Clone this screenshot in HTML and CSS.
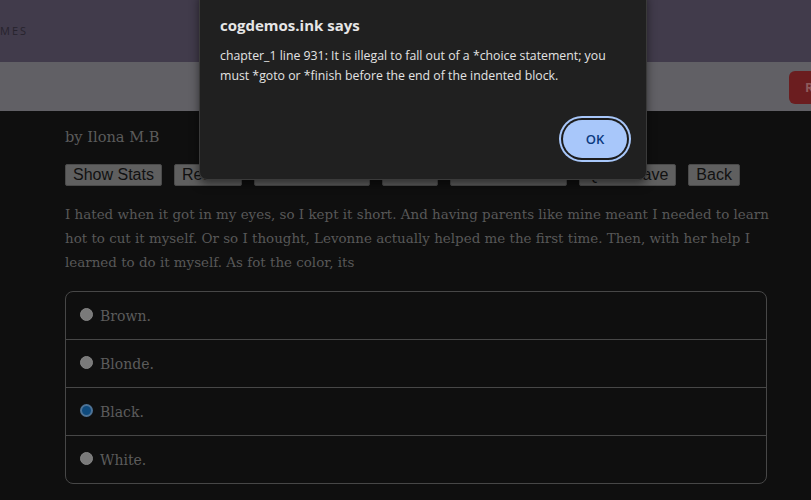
FILE: index.html
```html
<!DOCTYPE html>
<html lang="en">
<head>
<meta charset="utf-8">
<title>cogdemos</title>
<link rel="stylesheet" href="styles.css">
</head>
<body>
<header class="topbar">
  <nav class="topnav"><span class="navlink">MES</span></nav>
</header>
<div class="subbar">
  <span class="redbtn">R</span>
</div>
<main class="page">
  <div class="author">by Ilona M.B</div>
  <div class="buttons">
    <button class="btn">Show Stats</button>
    <button class="btn">Restart</button>
    <button class="btn">Achievements</button>
    <button class="btn">Menu</button>
    <button class="btn">Achievements</button>
    <button class="btn">Quick Save</button>
    <button class="btn">Back</button>
  </div>
  <p class="story">I hated when it got in my eyes, so I kept it short. And having parents like mine meant I needed to learn hot to cut it myself. Or so I thought, Levonne actually helped me the first time. Then, with her help I learned to do it myself. As fot the color, its</p>
  <form class="choices">
    <label class="choice"><input type="radio" name="c" class="radio"><span>Brown.</span></label>
    <label class="choice"><input type="radio" name="c" class="radio"><span>Blonde.</span></label>
    <label class="choice"><input type="radio" name="c" class="radio" checked><span>Black.</span></label>
    <label class="choice"><input type="radio" name="c" class="radio"><span>White.</span></label>
  </form>
</main>
<div class="dialog">
  <div class="dialog-title">cogdemos.ink says</div>
  <div class="dialog-msg">chapter_1 line 931: It is illegal to fall out of a *choice statement; you must *goto or *finish before the end of the indented block.</div>
  <div class="dialog-actions"><button class="okbtn">OK</button></div>
</div>
</body>
</html>
```
FILE: styles.css
```css
html, body {
  margin: 0;
  padding: 0;
  background: #0f0f0f;
  overflow: hidden;
  height: 500px;
}
body {
  position: relative;
  font-family: "DejaVu Serif", serif;
}
.topbar {
  height: 62px;
  background: #413b4b;
  display: flex;
  align-items: center;
}
.topnav {
  display: flex;
}
.navlink {
  font-family: "Open Sans", "Liberation Sans", sans-serif;
  font-size: 11px;
  letter-spacing: 2px;
  color: #27232d;
  margin-top: -1px;
}
.subbar {
  height: 49px;
  background: #616065;
  display: flex;
  justify-content: flex-end;
  align-items: center;
  overflow: hidden;
}
.redbtn {
  flex: none;
  width: 22px;
  height: 33px;
  box-sizing: border-box;
  background: #6b1d1f;
  border-radius: 6px 0 0 6px;
  color: #8e5a5b;
  font-family: "Open Sans", "Liberation Sans", sans-serif;
  font-weight: 700;
  font-size: 13px;
  line-height: 33px;
  padding-left: 16px;
  margin-top: 1px;
  overflow: hidden;
}
.page {
  padding: 14px 40px 0 65px;
}
.author {
  font-family: "DejaVu Serif", serif;
  font-size: 14.6px;
  color: #5b5b5b;
  line-height: 24px;
  height: 24px;
}
.buttons {
  display: flex;
  gap: 12px;
  margin-top: 15px;
}
.btn {
  font-family: "Liberation Sans", Arial, sans-serif;
  font-size: 16px;
  height: 22px;
  padding: 0 7px;
  background: #5f5f5f;
  color: #111;
  border: 1px solid #4a4a4a;
  border-radius: 2px;
  line-height: 20px;
}
.story {
  margin: 17px 0 0;
  font-size: 13.45px;
  line-height: 24px;
  color: #585858;
  width: 706px;
}
.choices {
  margin-top: 16px;
  width: 700px;
  border: 1px solid #474747;
  border-radius: 8px;
}
.choice {
  display: flex;
  align-items: center;
  height: 48px;
  padding-left: 14px;
  border-top: 1px solid #474747;
  font-size: 14px;
  color: #5c5c5c;
  box-sizing: border-box;
}
.choice:first-child {
  border-top: none;
  height: 47px;
}
.radio {
  appearance: none;
  -webkit-appearance: none;
  width: 13px;
  height: 13px;
  margin: -3px 7px 0 0;
  border-radius: 50%;
  background: #7a7a7a;
  border: 1px solid #858585;
  box-sizing: border-box;
}
.radio:checked {
  background: #0e4a7d;
  border: 2px solid #4e7396;
}
.dialog {
  position: absolute;
  left: 199px;
  top: -10px;
  width: 448px;
  height: 190px;
  box-sizing: border-box;
  background: #202020;
  border: 1px solid #3a3a3a;
  border-radius: 8px;
  box-shadow: 0 4px 10px rgba(0,0,0,0.5);
  padding: 23px 20px 0 20px;
  font-family: "Open Sans", "Noto Sans", sans-serif;
  color: #e6e6e6;
}
.dialog-title {
  font-size: 15px;
  font-weight: 700;
  line-height: 22px;
}
.dialog-msg {
  margin-top: 10px;
  font-size: 12.3px;
  line-height: 20px;
  color: #e3e3e3;
}
.dialog-actions {
  display: flex;
  justify-content: flex-end;
  margin-top: 34px;
}
.okbtn {
  width: 64px;
  height: 38px;
  margin-right: -1px;
  border: none;
  border-radius: 19px;
  background: #a8c7fa;
  color: #0b3a80;
  font-family: "Open Sans", "Noto Sans", sans-serif;
  font-weight: 600;
  font-size: 13px;
  box-shadow: 0 0 0 2px #1c1c1c, 0 0 0 4px #a8c7fa;
}
```
